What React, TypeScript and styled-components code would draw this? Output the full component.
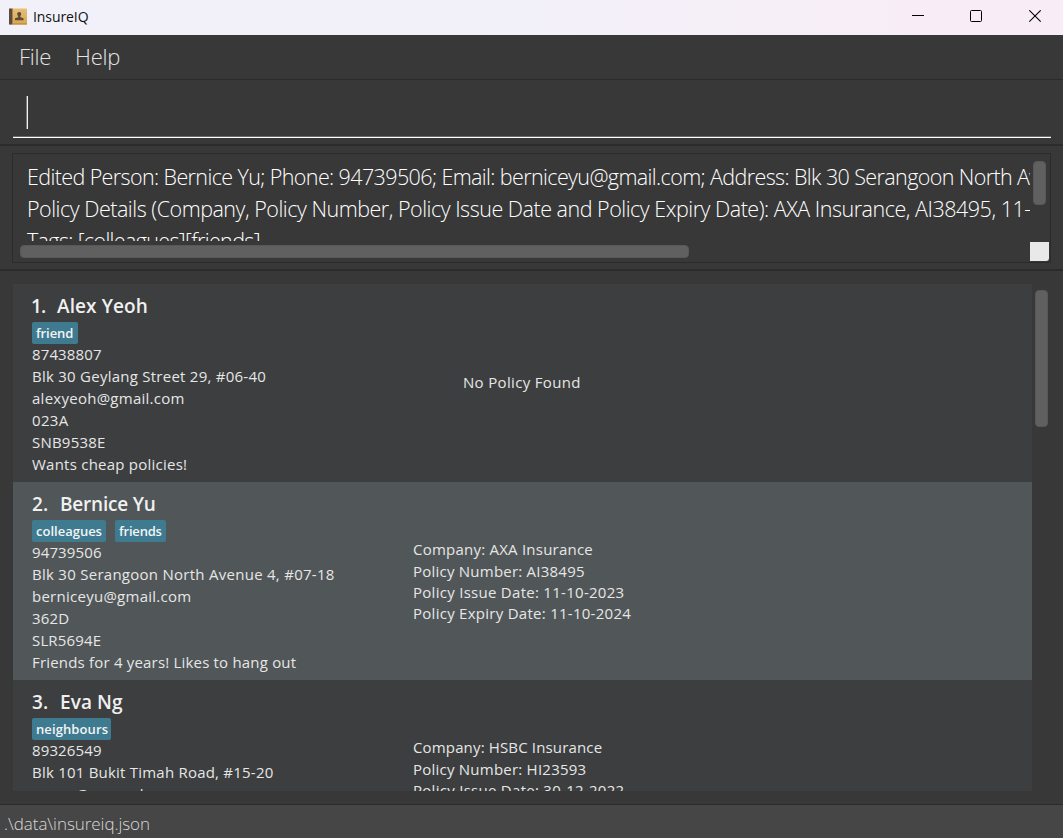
import React from "react";
import styled, { createGlobalStyle } from "styled-components";

const GlobalStyle = createGlobalStyle`
  * { box-sizing: border-box; }
  body { margin: 0; background: #383838; font-family: "Open Sans", "Noto Sans", sans-serif; overflow: hidden; }
`;

const Window = styled.div`
  width: 1063px;
  height: 838px;
  display: flex;
  flex-direction: column;
  background: #383838;
  color: #fff;
  overflow: hidden;
`;

const TitleBar = styled.header`
  flex: 0 0 35px;
  display: flex;
  align-items: center;
  padding: 0 21px 2px 9px;
  background: linear-gradient(90deg, #f2f1f9 0%, #f2f1f9 45%, #f8edf7 88%, #f8edf7 100%);
  color: #111;
`;

const AppIcon = styled.svg`
  width: 18px;
  height: 17px;
  margin-top: -1px;
`;

const AppName = styled.span`
  flex: 1;
  margin-left: 6px;
  font-size: 14px;
  line-height: 20px;
  letter-spacing: -0.08px;
`;

const WindowControls = styled.div`
  display: flex;
  gap: 46px;
  svg { width: 13px; height: 13px; display: block; }
`;

const MenuBar = styled.nav`
  flex: 0 0 45px;
  display: flex;
  gap: 24px;
  padding: 5px 0 0 19px;
  border-bottom: 1px solid #2b2b2b;
`;

const MenuItem = styled.span`
  font-size: 22px;
  font-weight: 300;
  line-height: 32px;
  color: #e4e4e4;
  letter-spacing: -0.25px;
`;

const CommandPane = styled.section`
  flex: 0 0 66px;
  padding: 5px 12px 6px 13px;
  border-bottom: 2px solid #2b2b2b;
`;

const CommandBox = styled.div`
  height: 53px;
  padding: 11px 14px 0 13px;
  border-bottom: 1px solid #fff;
  box-shadow: inset 0 -1px 0 #696969;
`;

const Caret = styled.div`
  width: 2px;
  height: 33px;
  background: linear-gradient(90deg, #7d7d7d 50%, #f2f2f2 50%);
`;

const ResultPane = styled.section`
  flex: 0 0 125px;
  padding: 7px 12px 6px 12px;
  border-bottom: 2px solid #2b2b2b;
`;

const ResultBox = styled.div`
  height: 110px;
  display: grid;
  grid-template-columns: 1fr 20px;
  grid-template-rows: 1fr 21px;
  border: 1px solid #2b2b2b;
`;

const ResultText = styled.div`
  overflow: hidden;
  padding: 7px 0 0 14px;
  height: 87px;
`;

const ResultLine = styled.div<{ $track: string }>`
  font-size: 21.5px;
  font-weight: 300;
  line-height: 32px;
  white-space: pre;
  letter-spacing: ${(p) => p.$track};
`;

const Thumb = styled.div<{ $w: number; $h: number }>`
  width: ${(p) => p.$w}px;
  height: ${(p) => p.$h}px;
  border-radius: 4px;
  background: #606060;
  border: 1px solid #585858;
`;

const VerticalTrack = styled.div`
  padding: 7px 0 0 3px;
`;

const HorizontalTrack = styled.div`
  padding: 4px 0 0 7px;
`;

const Corner = styled.div`
  width: 19px;
  height: 19px;
  margin-top: 1px;
  background: #e9e9e9;
  border-bottom-right-radius: 3px;
`;

const ListPane = styled.section`
  flex: 0 0 534px;
  display: flex;
  padding: 13px 0 13px 13px;
  border-bottom: 1px solid #2b2b2b;
`;

const List = styled.div`
  width: 1019px;
  height: 507px;
  overflow: hidden;
`;

const ListTrack = styled.div`
  padding: 6px 0 0 3px;
`;

const Card = styled.article<{ $alt: boolean }>`
  height: 198px;
  display: grid;
  grid-template-columns: 400px 1fr;
  background: ${(p) => (p.$alt ? "#515658" : "#3c3e3f")};
`;

const Details = styled.div`
  padding: 8px 0 0 19px;
`;

const Name = styled.h2<{ $track: string }>`
  display: flex;
  margin: 0;
  font-size: 19px;
  font-weight: 600;
  line-height: 28px;
  color: #f0f0f0;
  white-space: nowrap;
  letter-spacing: ${(p) => p.$track};
`;

const Ordinal = styled.span<{ $narrow: boolean }>`
  width: ${(p) => (p.$narrow ? 25 : 28)}px;
  margin-left: ${(p) => (p.$narrow ? -1 : 0)}px;
  margin-right: ${(p) => (p.$narrow ? 1 : 0)}px;
  letter-spacing: ${(p) => (p.$narrow ? "-1px" : "0")};
`;

const Tags = styled.div`
  display: flex;
  gap: 9px;
  margin: 2px 0 -1px;
  height: 22px;
`;

const Tag = styled.span<{ $w: number; $track: string }>`
  width: ${(p) => p.$w}px;
  padding-left: 4px;
  border-radius: 2px;
  background: #3e7b91;
  font-size: 13px;
  font-weight: 600;
  line-height: 22px;
  color: #f4f4f4;
  white-space: nowrap;
  letter-spacing: ${(p) => p.$track};
`;

const Row = styled.div<{ $track?: string; $h?: string }>`
  font-size: 15px;
  line-height: ${(p) => p.$h ?? "22px"};
  color: #e6e6e6;
  white-space: nowrap;
  letter-spacing: ${(p) => p.$track ?? "0"};
`;

const Policy = styled.div`
  align-self: center;
  padding-top: 2px;
`;

const NoPolicy = styled(Policy)`
  padding: 0 0 2px 50px;
`;

const StatusBar = styled.footer`
  flex: 1;
  padding: 5px 0 0 4px;
  background: #464646;
  color: #d8d8d8;
  font-size: 17px;
  font-weight: 300;
  line-height: 28px;
  letter-spacing: -0.05px;
`;

type Line = [text: string, track: string];

interface Person {
  name: Line;
  tags: { label: string; width: number; track: string }[];
  lines: Line[];
  policy: Line[];
}

const people: Person[] = [
  {
    name: ["Alex Yeoh", "0.1px"],
    tags: [{ label: "friend", width: 46, track: "-0.1px" }],
    lines: [
      ["87438807", "0.12px"],
      ["Blk 30 Geylang Street 29, #06-40", "0.25px"],
      ["alexyeoh@gmail.com", "0.26px"],
      ["023A", "0.3px"],
      ["SNB9538E", "0.22px"],
      ["Wants cheap policies!", "0.24px"],
    ],
    policy: [],
  },
  {
    name: ["Bernice Yu", "-0.2px"],
    tags: [
      { label: "colleagues", width: 74, track: "0" },
      { label: "friends", width: 51, track: "-0.2px" },
    ],
    lines: [
      ["94739506", "0.12px"],
      ["Blk 30 Serangoon North Avenue 4, #07-18", "0.27px"],
      ["berniceyu@gmail.com", "0.26px"],
      ["362D", "0.2px"],
      ["SLR5694E", "0.15px"],
      ["Friends for 4 years! Likes to hang out", "0.19px"],
    ],
    policy: [
      ["Company: AXA Insurance", "0.23px"],
      ["Policy Number: AI38495", "0.23px"],
      ["Policy Issue Date: 11-10-2023", "0.28px"],
      ["Policy Expiry Date: 11-10-2024", "0.27px"],
    ],
  },
  {
    name: ["Eva Ng", "0.1px"],
    tags: [{ label: "neighbours", width: 79, track: "0.1px" }],
    lines: [
      ["89326549", "0.12px"],
      ["Blk 101 Bukit Timah Road, #15-20", "0.22px"],
      ["evang@example.com", "0.45px"],
    ],
    policy: [
      ["Company: HSBC Insurance", "0.15px"],
      ["Policy Number: HI23593", "0.23px"],
      ["Policy Issue Date: 30-12-2022", "0.28px"],
      ["Policy Expiry Date: 30-12-2023", "0.27px"],
    ],
  },
];

function PersonCard({ person, index }: { person: Person; index: number }) {
  return (
    <Card $alt={index % 2 === 1}>
      <Details>
        <Name $track={person.name[1]}>
          <Ordinal $narrow={index === 0}>{index + 1}.</Ordinal>
          <span>{person.name[0]}</span>
        </Name>
        <Tags>
          {person.tags.map((t) => (
            <Tag key={t.label} $w={t.width} $track={t.track}>{t.label}</Tag>
          ))}
        </Tags>
        {person.lines.map(([text, track]) => (
          <Row key={text} $track={track}>{text}</Row>
        ))}
      </Details>
      {person.policy.length === 0 ? (
        <NoPolicy>
          <Row $track="0.33px">No Policy Found</Row>
        </NoPolicy>
      ) : (
        <Policy>
          {person.policy.map(([text, track]) => (
            <Row key={text} $track={track} $h="21.4px">{text}</Row>
          ))}
        </Policy>
      )}
    </Card>
  );
}

export default function App() {
  return (
    <Window>
      <GlobalStyle />
      <TitleBar>
        <AppIcon viewBox="0 0 18 17">
          <defs>
            <linearGradient id="cover" x1="0" y1="0" x2="0" y2="1">
              <stop offset="0" stopColor="#e6bf78" />
              <stop offset="1" stopColor="#d6a651" />
            </linearGradient>
          </defs>
          <rect x="0" y="0.5" width="18" height="16" rx="0.8" fill="url(#cover)" />
          <rect x="0" y="0.5" width="3" height="16" rx="0.6" fill="#5d4a3c" />
          <rect x="3" y="0.5" width="1" height="16" fill="#a88350" />
          <rect x="3.4" y="15.4" width="14.6" height="1.1" fill="#b98a3c" />
          <path d="M10.2 4c1.3 0 2 .9 2 2.1 0 .9-.4 1.500-.8 2v1.200l3.100.9v2H6v-2l3.100-.9V8.100c-.5-.5-.9-1.100-.9-2C8.200 4.900 8.900 4 10.200 4z" fill="#5e4a35" />
        </AppIcon>
        <AppName>InsureIQ</AppName>
        <WindowControls>
          <svg viewBox="0 0 13 13"><path d="M1 5.5h12" stroke="#000" /></svg>
          <svg viewBox="0 0 13 13"><rect x="0.5" y="0.5" width="11" height="11" rx="1" fill="none" stroke="#000" /></svg>
          <svg viewBox="0 0 13 13"><path d="M0.3 0.3L11.7 11.7M11.7 0.3L0.3 11.7" stroke="#000" strokeWidth="1.1" /></svg>
        </WindowControls>
      </TitleBar>
      <MenuBar>
        <MenuItem>File</MenuItem>
        <MenuItem>Help</MenuItem>
      </MenuBar>
      <CommandPane>
        <CommandBox><Caret /></CommandBox>
      </CommandPane>
      <ResultPane>
        <ResultBox>
          <ResultText>
            <ResultLine $track="-0.61px">
              Edited Person: Bernice Yu; Phone: 94739506; Email: berniceyu@gmail.com; Address: Blk 30 Serangoon North Avenue 4, #07-18
            </ResultLine>
            <ResultLine $track="-0.48px">
              Policy Details (Company, Policy Number, Policy Issue Date and Policy Expiry Date): AXA Insurance, AI38495, 11-10-2023
            </ResultLine>
            <ResultLine $track="-0.65px">Tags: [colleagues][friends]</ResultLine>
          </ResultText>
          <VerticalTrack><Thumb $w={13} $h={44} /></VerticalTrack>
          <HorizontalTrack><Thumb $w={669} $h={13} /></HorizontalTrack>
          <Corner />
        </ResultBox>
      </ResultPane>
      <ListPane>
        <List>
          {people.map((p, i) => (
            <PersonCard key={p.name[0]} person={p} index={i} />
          ))}
        </List>
        <ListTrack><Thumb $w={13} $h={137} /></ListTrack>
      </ListPane>
      <StatusBar>.\data\insureiq.json</StatusBar>
    </Window>
  );
}
